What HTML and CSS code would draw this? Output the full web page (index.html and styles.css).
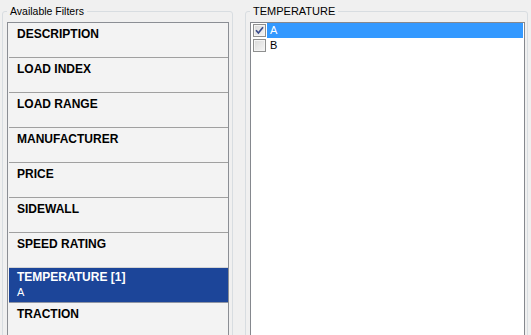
FILE: index.html
```html
<!DOCTYPE html>
<html lang="en">
<head>
    <meta charset="UTF-8">
    <title>Filters</title>
    <link rel="stylesheet" href="styles.css">
</head>
<body>
    <div class="window">
        <!-- Left: list of filter groups -->
        <fieldset class="group group-left">
            <legend>Available Filters</legend>
            <div class="filter-list">
                <div class="filter">DESCRIPTION</div>
                <div class="filter">LOAD INDEX</div>
                <div class="filter">LOAD RANGE</div>
                <div class="filter">MANUFACTURER</div>
                <div class="filter">PRICE</div>
                <div class="filter">SIDEWALL</div>
                <div class="filter">SPEED RATING</div>
                <div class="filter selected">
                    TEMPERATURE [1]
                    <span class="values">A</span>
                </div>
                <div class="filter">TRACTION</div>
            </div>
        </fieldset>

        <!-- Right: values of the selected filter -->
        <fieldset class="group group-right">
            <legend>TEMPERATURE</legend>
            <div class="value-list">
                <div class="value-item">
                    <span class="checkbox checked">
                        <svg width="13" height="13" viewBox="0 0 13 13"><path d="M3 6.3 L5.4 9 L10 3.2" fill="none" stroke="#3b4d8c" stroke-width="1.7"/></svg>
                    </span>
                    <span class="value-label active">A</span>
                </div>
                <div class="value-item">
                    <span class="checkbox"></span>
                    <span class="value-label">B</span>
                </div>
            </div>
        </fieldset>
    </div>
</body>
</html>
```

FILE: styles.css
```css
* {
    box-sizing: border-box;
}

html, body {
    margin: 0;
    height: 335px;
    overflow: hidden;
}

body {
    background-color: #f0f0f0;
    font-family: "Liberation Sans", Arial, sans-serif;
    color: #000;
}

.window {
    display: flex;
    align-items: flex-start;
    height: 335px;
    overflow: hidden;
    padding: 5px 0 0 2px;
}

/* Group boxes */
.group {
    margin: 0;
    border: 1px solid #d8dde1;
    border-radius: 3px;
    height: 345px;
    min-width: 0;
}

.group legend {
    font-size: 11px;
    line-height: 13px;
    padding: 0 3px 0 3px;
}

.group-left {
    width: 231px;
    padding: 4px 3px 0 4px;
}

.group-left legend {
    font-size: 10.5px;
}

.group-right {
    width: 283px;
    margin-left: 12px;
    padding: 4px 2px 0 4px;
}

/* Filter list */
.filter-list {
    border: 1px solid #8b8e94;
    background-color: #f3f3f3;
    height: 320px;
}

.filter {
    height: 35px;
    margin-left: 1px;
    padding: 4px 0 0 8px;
    border-bottom: 1px solid #a0a0a0;
    font-size: 12px;
    line-height: 14px;
    font-weight: bold;
}

.filter:last-child {
    border-bottom: none;
}

.filter.selected {
    background-color: #1c4599;
    color: #fff;
    padding-top: 2px;
    margin-top: -1px;
    height: 36px;
    border-top: 1px solid #d4d4d4;
    border-bottom-color: #8f95a4;
}

.filter .values {
    display: block;
    font-weight: normal;
    font-size: 11px;
    line-height: 13px;
    margin-top: 2px;
}

/* Value list */
.value-list {
    border: 1px solid #85888e;
    background-color: #fff;
    height: 320px;
}

.value-item {
    display: flex;
    height: 15px;
}

.checkbox {
    width: 13px;
    height: 13px;
    margin: 1px 1px 1px 2px;
    border: 1px solid #8e8f8f;
    background: linear-gradient(135deg, #d8d8d8, #f6f6f6);
    box-shadow: inset 0 0 0 1px #f4f4f4;
    position: relative;
    flex: none;
}

.checkbox svg {
    position: absolute;
    left: -1px;
    top: -1px;
}

.value-label {
    flex: 1;
    margin-right: 1px;
    padding-left: 3px;
    font-size: 11px;
    line-height: 15px;
}

.value-label.active {
    background-color: #3399ff;
    color: #fff;
}
```
